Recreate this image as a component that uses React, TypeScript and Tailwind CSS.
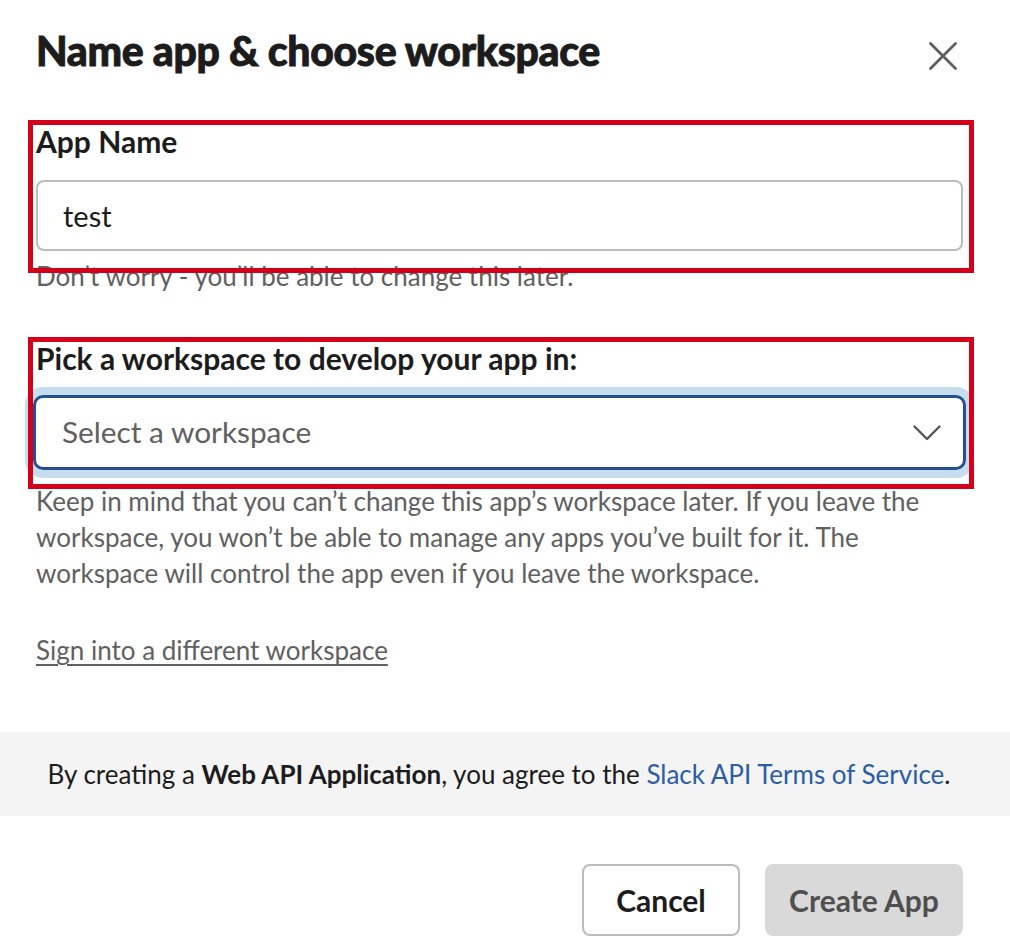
import React from "react";

export default function App() {
  return (
    <div className="relative w-[1010px] h-[950px] overflow-hidden bg-white font-['Lato','Noto_Sans',sans-serif] text-[#1d1c1d]">
      <div className="px-[36px] pt-[26px]">
        <div className="flex items-start justify-between">
          <h1 className="text-[41px] leading-[50px] font-black tracking-[-0.35px] [-webkit-text-stroke:0.9px_#1d1c1d]">
            Name app &amp; choose workspace
          </h1>
          <button className="mt-[16px] mr-[17px] text-[#5e5e5e]" aria-label="Close">
            <svg width="28" height="28" viewBox="0 0 28 28" fill="none" stroke="currentColor" strokeWidth="2.8" strokeLinecap="round">
              <path d="M1.5 1.5 L26.5 26.5 M26.5 1.5 L1.5 26.5" />
            </svg>
          </button>
        </div>

        <div className="mt-[49px] text-[30px] leading-[32px] font-bold">App Name</div>
        <div className="mt-[23px] mr-[11px] h-[71px] flex items-center rounded-[8px] border-2 border-[#bcbcbc] px-[25px] text-[29px]">
          test
        </div>
        <div className="mt-[7px] text-[26px] leading-[36px] text-[#616061]">
          Don’t worry - you’ll be able to change this later.
        </div>

        <div className="mt-[48px] text-[30px] leading-[32px] font-bold">
          Pick a workspace to develop your app in:
        </div>
        <div className="mt-[21px] ml-[-3px] mr-[8px] h-[75px] flex items-center justify-between rounded-[10px] border-[3px] border-[#25508f] pl-[26px] pr-[22px] shadow-[0_0_0_8px_#c6ddee] text-[29.8px] text-[#616061]">
          <span>Select a workspace</span>
          <svg width="28" height="16" viewBox="0 0 28 16" fill="none" stroke="#555555" strokeWidth="2.4" strokeLinecap="round" strokeLinejoin="round">
            <path d="M1.5 1.5 L14 14 L26.5 1.5" />
          </svg>
        </div>
        <p className="mt-[13px] text-[26px] leading-[36px] text-[#616061]">
          Keep in mind that you can’t change this app’s workspace later. If you leave the
          <br />
          workspace, you won’t be able to manage any apps you’ve built for it. The
          <br />
          workspace will control the app even if you leave the workspace.
        </p>
        <a href="#" className="mt-[41px] block w-fit text-[26px] leading-[36px] text-[#616061] underline underline-offset-[4px] decoration-[1.5px]">
          Sign into a different workspace
        </a>
      </div>

      <div className="mt-[64px] bg-[#f4f4f4] py-[24px] pr-[12px] text-center text-[26px] leading-[36px] whitespace-nowrap">
        By creating a <span className="font-bold">Web API Application</span>, you agree to the{" "}
        <a href="#" className="text-[#2b5ea6]">Slack API Terms of Service</a>.
      </div>

      <div className="mt-[48px] flex justify-end gap-[25px] pr-[47px]">
        <button className="h-[72px] w-[158px] rounded-[8px] border-2 border-[#bcbcbc] bg-white text-[30px] font-bold text-[#1d1c1d]">
          Cancel
        </button>
        <button className="h-[72px] w-[198px] rounded-[8px] bg-[#d9d9d9] text-[30px] font-bold text-[#4f4f4f]">
          Create App
        </button>
      </div>

      <div className="pointer-events-none absolute left-[28px] top-[120px] h-[153px] w-[946px] border-[5px] border-[#d4001a]" />
      <div className="pointer-events-none absolute left-[28px] top-[337px] h-[152px] w-[946px] border-[5px] border-[#d4001a]" />
    </div>
  );
}
